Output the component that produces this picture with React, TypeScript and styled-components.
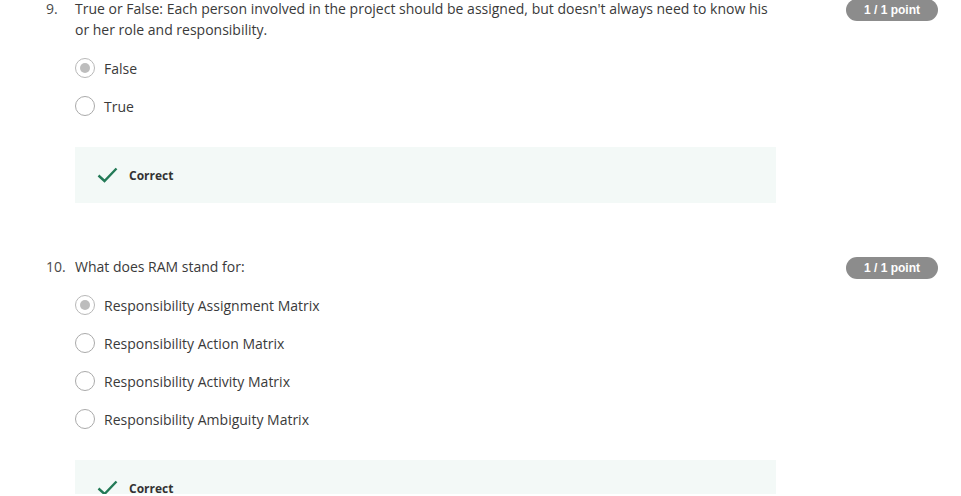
import React from 'react';
import styled, { createGlobalStyle } from 'styled-components';

const GlobalStyle = createGlobalStyle`
  body {
    margin: 0;
    background: #fff;
    font-family: "Open Sans", "Liberation Sans", sans-serif;
    color: #3a3a3a;
  }
`;

const Page = styled.div`
  width: 961px;
  height: 496px;
  overflow: hidden;
  margin-top: -2px;
`;

const Question = styled.div`
  display: flex;
  align-items: flex-start;
  padding: 0 23px 0 46px;
  margin-bottom: 53px;
`;

const Num = styled.div`
  width: 29px;
  font-size: 14px;
  line-height: 21px;
  color: #4a4a4a;
`;

const Body = styled.div`
  width: 701px;
`;

const Prompt = styled.div`
  font-size: 14px;
  line-height: 21px;
  color: #3a3a3a;
  padding-right: 6px;
  margin-bottom: 9px;
`;

const Badge = styled.div`
  margin-left: auto;
  margin-top: 1px;
  width: 92px;
  height: 22px;
  border-radius: 11px;
  background: #8c8c8c;
  color: #fff;
  font-family: "Liberation Sans", Arial, sans-serif;
  font-weight: bold;
  font-size: 12px;
  line-height: 22px;
  text-align: center;
`;

const Option = styled.div`
  display: flex;
  align-items: center;
  height: 38px;
  gap: 9px;
  font-size: 14px;
  color: #3a3a3a;
`;

const Radio = styled.span<{ $checked?: boolean }>`
  box-sizing: border-box;
  width: 20px;
  height: 20px;
  border-radius: 50%;
  border: 1.5px solid ${(p) => (p.$checked ? '#b8b8b8' : '#aaaaaa')};
  display: flex;
  align-items: center;
  justify-content: center;
  &::after {
    content: '';
    display: ${(p) => (p.$checked ? 'block' : 'none')};
    width: 10px;
    height: 10px;
    border-radius: 50%;
    background: #bdbdbd;
  }
`;

const Feedback = styled.div`
  margin-top: 22px;
  height: 56px;
  background: #f3f9f7;
  display: flex;
  align-items: center;
  padding-left: 22px;
  gap: 11px;
  font-size: 12px;
  font-weight: 700;
  color: #333;
`;

const Check = () => (
  <svg width="21" height="16" viewBox="0 0 21 16">
    <path d="M1.5 8.5 L7.5 14 L19.5 1.5" fill="none" stroke="#237a57" strokeWidth="2.4" />
  </svg>
);

type Q = { n: string; text: string; options: string[]; picked: number };

const questions: Q[] = [
  {
    n: '9.',
    text: "True or False: Each person involved in the project should be assigned, but doesn't always need to know his or her role and responsibility.",
    options: ['False', 'True'],
    picked: 0,
  },
  {
    n: '10.',
    text: 'What does RAM stand for:',
    options: [
      'Responsibility Assignment Matrix',
      'Responsibility Action Matrix',
      'Responsibility Activity Matrix',
      'Responsibility Ambiguity Matrix',
    ],
    picked: 0,
  },
];

export default function App() {
  return (
    <Page>
      <GlobalStyle />
      {questions.map((q) => (
        <Question key={q.n}>
          <Num>{q.n}</Num>
          <Body>
            <Prompt>{q.text}</Prompt>
            {q.options.map((o, i) => (
              <Option key={o}>
                <Radio $checked={i === q.picked} />
                {o}
              </Option>
            ))}
            <Feedback>
              <Check />
              Correct
            </Feedback>
          </Body>
          <Badge>1 / 1 point</Badge>
        </Question>
      ))}
    </Page>
  );
}
